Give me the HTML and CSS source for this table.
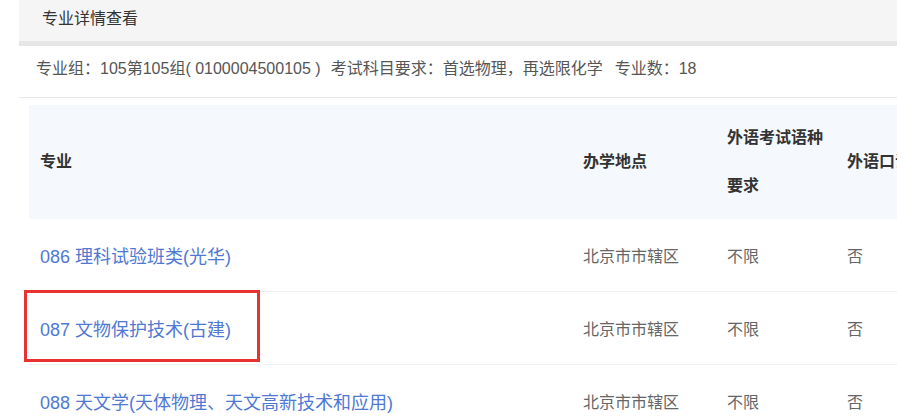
FILE: index.html
```html
<!DOCTYPE html>
<html lang="zh-CN">
<head>
<meta charset="utf-8">
<title>专业详情查看</title>
<link rel="stylesheet" href="styles.css">
</head>
<body>
<div class="panel">
  <div class="panel-head">专业详情查看</div>
  <div class="info">专业组：105第105组( 0100004500105 )<span class="gap1">考试科目要求：首选物理，再选限化学</span><span class="gap2">专业数：18</span></div>
  <div class="table-wrap">
    <table class="majors">
      <colgroup>
        <col class="c1"><col class="c2"><col class="c3"><col class="c4">
      </colgroup>
      <thead>
        <tr>
          <th>专业</th>
          <th>办学地点</th>
          <th>外语考试语种<br>要求</th>
          <th class="nowrap">外语口试要求</th>
        </tr>
      </thead>
      <tbody>
        <tr>
          <td><a class="link">086 理科试验班类(光华)</a></td>
          <td>北京市市辖区</td>
          <td>不限</td>
          <td>否</td>
        </tr>
        <tr>
          <td class="marked"><a class="link">087 文物保护技术(古建)</a><span class="mark-box"></span></td>
          <td>北京市市辖区</td>
          <td>不限</td>
          <td>否</td>
        </tr>
        <tr>
          <td><a class="link">088 天文学(天体物理、天文高新技术和应用)</a></td>
          <td>北京市市辖区</td>
          <td>不限</td>
          <td>否</td>
        </tr>
      </tbody>
    </table>
  </div>
</div>
</body>
</html>
```

FILE: styles.css
```css
html, body {
  margin: 0;
  padding: 0;
  background: #ffffff;
}
body {
  font-family: "Liberation Sans", "Noto Sans CJK SC", sans-serif;
  font-size: 16px;
  color: #666666;
  width: 918px;
  height: 420px;
  overflow: hidden;
}
.panel {
  margin-left: 19px;
  width: 878px;
}
.panel-head {
  height: 41px;
  line-height: 38px;
  padding-left: 23px;
  background: #f5f5f5;
  border-bottom: 5px solid #e6e6e6;
  color: #333333;
  font-size: 16px;
}
.info {
  height: 51px;
  line-height: 46px;
  padding-left: 17px;
  border-bottom: 1px solid #e8e8e8;
  color: #555555;
  white-space: nowrap;
}
.gap1 { margin-left: 10px; }
.gap2 { margin-left: 12px; }
.table-wrap {
  margin-top: 7px;
  padding-left: 10px;
  width: 868px;
  overflow: hidden;
}
.majors {
  table-layout: fixed;
  width: 968px;
  border-collapse: collapse;
}
.c1 { width: 543px; }
.c2 { width: 144px; }
.c3 { width: 120px; }
.c4 { width: 161px; }
.majors th {
  background: #f5f8fc;
  color: #333333;
  font-weight: bold;
  text-align: left;
  line-height: 48px;
  padding: 9px 11px;
  vertical-align: middle;
}
.majors th.nowrap { white-space: nowrap; }
.majors td {
  height: 72px;
  padding: 0 11px;
  border-bottom: 1px solid #eef0f3;
  vertical-align: middle;
  white-space: nowrap;
}
.link {
  color: #4f78d3;
  font-size: 18px;
  text-decoration: none;
}
.marked {
  position: relative;
}
.mark-box {
  position: absolute;
  left: -5px;
  top: -2px;
  width: 230px;
  height: 66px;
  border: 3px solid #e8322f;
}
```
